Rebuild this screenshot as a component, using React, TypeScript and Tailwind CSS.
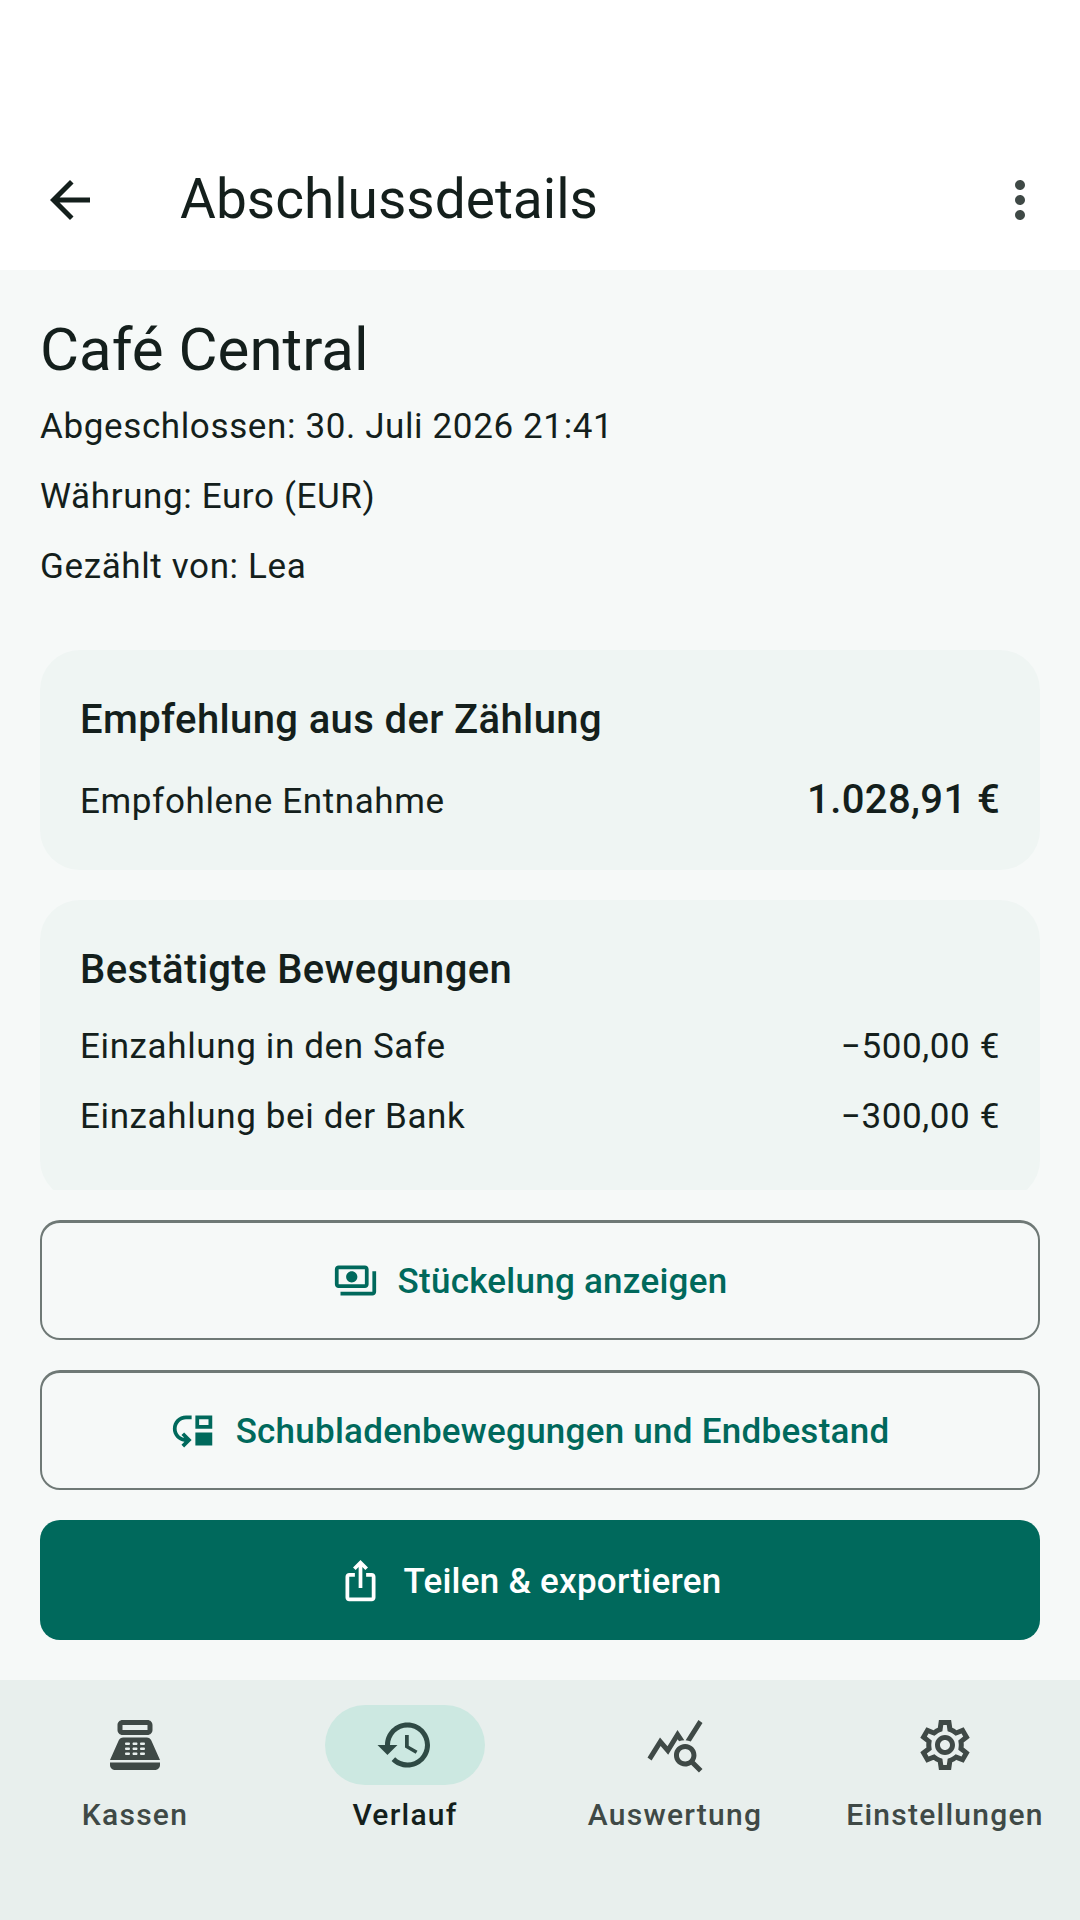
const P = {
  back: 'M20 11H7.83l5.59-5.59L12 4l-8 8 8 8 1.41-1.41L7.83 13H20v-2z',
  more: 'M12 8c1.1 0 2-.9 2-2s-.9-2-2-2-2 .9-2 2 .9 2 2 2zm0 2c-1.1 0-2 .9-2 2s.9 2 2 2 2-.9 2-2-.9-2-2-2zm0 6c-1.1 0-2 .9-2 2s.9 2 2 2 2-.9 2-2-.9-2-2-2z',
  payments: 'M19 14V6c0-1.1-.9-2-2-2H3c-1.1 0-2 .9-2 2v8c0 1.1.9 2 2 2h14c1.1 0 2-.9 2-2zm-2 0H3V6h14v8zm-7-7c-1.66 0-3 1.34-3 3s1.34 3 3 3 3-1.34 3-3-1.34-3-3-3zm13 0v11c0 1.1-.9 2-2 2H4v-2h17V7h2z',
  moveDown: 'M3 11c0 2.45 1.76 4.47 4.08 4.91l-1.49-1.49L7 13l4 4.01L7 21l-1.41-1.41 1.58-1.58v-.06C3.7 17.54 1 14.58 1 11c0-3.87 3.13-7 7-7h3v2H8c-2.76 0-5 2.24-5 5zM22 11V4h-9v7h9zm-2-2h-5V6h5v3zM13 20h9v-7h-9v7z',
  share: 'M16 5l-1.42 1.42-1.59-1.59V16h-1.98V4.83L9.42 6.42 8 5l4-4 4 4zm4 5v11c0 1.1-.9 2-2 2H6c-1.11 0-2-.9-2-2V10c0-1.11.89-2 2-2h3v2H6v11h12V10h-3V8h3c1.1 0 2 .9 2 2z',
  register: 'M17 2H7c-1.1 0-2 .9-2 2v2c0 1.1.9 2 2 2h10c1.1 0 2-.9 2-2V4c0-1.1-.9-2-2-2zm0 4H7V4h10v2zM20 22H4c-1.1 0-2-.9-2-2v-1h20v1c0 1.1-.9 2-2 2zM18.53 10.19C18.21 9.47 17.49 9 16.7 9H7.3c-.79 0-1.51.47-1.83 1.19L2 18h20l-3.47-7.81zM9.5 16h-1c-.28 0-.5-.22-.5-.5s.22-.5.5-.5h1c.28 0 .5.22.5.5s-.22.5-.5.5zm0-2h-1c-.28 0-.5-.22-.5-.5s.22-.5.5-.5h1c.28 0 .5.22.5.5s-.22.5-.5.5zm0-2h-1c-.28 0-.5-.22-.5-.5s.22-.5.5-.5h1c.28 0 .5.22.5.5s-.22.5-.5.5zm3 4h-1c-.28 0-.5-.22-.5-.5s.22-.5.5-.5h1c.28 0 .5.22.5.5s-.22.5-.5.5zm0-2h-1c-.28 0-.5-.22-.5-.5s.22-.5.5-.5h1c.28 0 .5.22.5.5s-.22.5-.5.5zm0-2h-1c-.28 0-.5-.22-.5-.5s.22-.5.5-.5h1c.28 0 .5.22.5.5s-.22.5-.5.5zm3 4h-1c-.28 0-.5-.22-.5-.5s.22-.5.5-.5h1c.28 0 .5.22.5.5s-.22.5-.5.5zm0-2h-1c-.28 0-.5-.22-.5-.5s.22-.5.5-.5h1c.28 0 .5.22.5.5s-.22.5-.5.5zm0-2h-1c-.28 0-.5-.22-.5-.5s.22-.5.5-.5h1c.28 0 .5.22.5.5s-.22.5-.5.5z',
  history: 'M13 3c-4.97 0-9 4.03-9 9H1l3.89 3.89.07.14L9 12H6c0-3.87 3.13-7 7-7s7 3.13 7 7-3.13 7-7 7c-1.93 0-3.68-.79-4.94-2.06l-1.42 1.42C8.27 19.99 10.51 21 13 21c4.97 0 9-4.03 9-9s-4.03-9-9-9zm-1 5v5l4.28 2.54.72-1.21-3.5-2.08V8H12z',
  stats: 'M19.88 18.47c.44-.7.7-1.51.7-2.39 0-2.49-2.01-4.5-4.5-4.5s-4.5 2.01-4.5 4.5 2.01 4.5 4.49 4.5c.88 0 1.7-.26 2.39-.7L21.58 23 23 21.58l-3.12-3.11zm-3.8.11c-1.38 0-2.5-1.12-2.5-2.5s1.12-2.5 2.5-2.5 2.5 1.12 2.5 2.5-1.12 2.5-2.5 2.5zm-.36-8.5c-.74.02-1.45.18-2.1.45l-.55-.83-3.8 6.18-3.01-3.52-3.63 5.81L1 17l5-8 3 3.5L13 6l2.72 4.08zm2.59.5c-.64-.28-1.33-.45-2.05-.49L21.38 2 23 3.18l-4.69 7.4z',
  settings: 'M19.44 12.99l-.01.02c.04-.33.08-.67.08-1.01 0-.34-.03-.66-.07-.99l.01.02 2.44-1.92-2.43-4.22-2.87 1.16.01.01c-.52-.4-1.09-.74-1.71-.99h.01L14.44 2H9.57l-.44 3.07h.01c-.62.25-1.19.59-1.71.99l.01-.01-2.88-1.17-2.44 4.22 2.44 1.92.01-.02c-.04.33-.07.65-.07.99 0 .34.03.68.08 1.01l-.01-.02-2.1 1.65-.33.26 2.43 4.2 2.88-1.15-.02-.04c.53.41 1.1.75 1.73 1.01h-.03L9.58 22h4.85s.03-.18.06-.42l.38-2.65h-.01c.62-.25 1.2-.59 1.73-1.01l-.02.04 2.88 1.15 2.43-4.2s-.14-.12-.33-.26l-2.11-1.66zm-1.98-1.71c.04.31.05.52.05.73 0 .21-.02.43-.05.73l-.14 1.13.89.7 1.08.84-.7 1.21-1.27-.51-1.04-.42-.9.68c-.43.32-.84.56-1.25.73l-1.06.43-.16 1.13-.2 1.35h-1.4l-.19-1.35-.16-1.13-1.06-.43c-.43-.18-.83-.41-1.23-.71l-.91-.7-1.06.43-1.27.51-.7-1.21 1.08-.84.89-.7-.14-1.13c-.03-.31-.05-.54-.05-.74s.02-.43.05-.73l.14-1.13-.89-.7-1.08-.84.7-1.21 1.27.51 1.04.42.9-.68c.43-.32.84-.56 1.25-.73l1.06-.43.16-1.13.2-1.35h1.39l.19 1.35.16 1.13 1.06.43c.43.18.83.41 1.23.71l.91.7 1.06-.43 1.27-.51.7 1.21-1.07.85-.89.7.14 1.13zM12 8c-2.21 0-4 1.79-4 4s1.79 4 4 4 4-1.79 4-4-1.79-4-4-4zm0 6c-1.1 0-2-.9-2-2s.9-2 2-2 2 .9 2 2-.9 2-2 2z',
};

function Icon({ d, className }: { d: string; className?: string }) {
  return (
    <svg viewBox="0 0 24 24" fill="currentColor" className={className}>
      <path d={d} />
    </svg>
  );
}

function Row({ label, value }: { label: string; value: string }) {
  return (
    <div className="flex justify-between h-[50px] text-[35px] leading-[54px] tracking-[0.625px] text-[#141f1c]">
      <span>{label}</span>
      <span>{value}</span>
    </div>
  );
}

function ActionButton({ d, label, filled }: { d: string; label: string; filled?: boolean }) {
  return (
    <button className={`w-full h-[120px] rounded-[20px] pr-[20px] flex items-center justify-center gap-[20px] text-[35px] font-medium tracking-[0.25px] ${filled ? 'bg-[#00695c] text-white' : 'border-2 border-t-[3px] border-[#6f7976] text-[#00695c]'}`}>
      <Icon d={d} className="w-[45px] h-[45px]" />
      <span className="pt-[4px]">{label}</span>
    </button>
  );
}

function NavItem({ d, label, active }: { d: string; label: string; active?: boolean }) {
  return (
    <div className="flex-1 flex flex-col items-center">
      <div className={`w-[160px] h-[80px] rounded-full flex items-center justify-center ${active ? 'bg-[#cce8e1]' : ''}`}>
        <Icon d={d} className={`w-[60px] h-[60px] ${active ? 'text-[#2f4a45]' : 'text-[#3f4946]'}`} />
      </div>
      <span className={`mt-[10px] text-[30px] leading-[40px] font-medium tracking-[1.25px] ${active ? 'text-[#141f1c]' : 'text-[#3f4946]'}`}>
        {label}
      </span>
    </div>
  );
}

export default function App() {
  return (
    <div className="w-[1080px] h-[1920px] flex flex-col bg-[#f6f9f8] font-['Roboto',sans-serif]">
      <header className="h-[270px] bg-white flex items-end pb-[10px] shrink-0">
        <div className="h-[120px] w-full flex items-center pl-[40px] pr-[30px]">
          <Icon d={P.back} className="w-[60px] h-[60px] text-[#141f1c]" />
          <h1 className="ml-[80px] pb-[2px] flex-1 text-[55px] text-[#141f1c]">Abschlussdetails</h1>
          <Icon d={P.more} className="w-[60px] h-[60px] text-[#3f4946]" />
        </div>
      </header>

      <main className="flex-1 px-[40px] pt-[40px] flex flex-col">
        <h2 className="text-[60px] leading-[80px] text-[#141f1c]">Café Central</h2>
        <div className="mt-[10px] flex flex-col gap-[20px] text-[35px] leading-[54px] tracking-[0.625px] text-[#141f1c]">
          <p className="h-[50px]">Abgeschlossen: 30. Juli 2026 21:41</p>
          <p className="h-[50px]">Währung: Euro (EUR)</p>
          <p className="h-[50px]">Gezählt von: Lea</p>
        </div>

        <section className="mt-[60px] rounded-[40px] bg-[#eff5f3] p-[40px]">
          <h3 className="text-[40px] leading-[60px] font-medium tracking-[0.375px] text-[#141f1c]">Empfehlung aus der Zählung</h3>
          <div className="mt-[20px] h-[60px] flex justify-between items-center text-[35px] tracking-[0.625px] text-[#141f1c]">
            <span className="pt-[4px]">Empfohlene Entnahme</span>
            <span className="text-[40px] font-medium tracking-[0.375px]">1.028,91 €</span>
          </div>
        </section>

        <div className="mt-[30px] h-[290px] overflow-hidden shrink-0">
          <section className="h-[300px] rounded-[40px] bg-[#eff5f3] px-[40px] pt-[40px]">
            <h3 className="text-[40px] leading-[60px] font-medium tracking-[0.375px] text-[#141f1c]">Bestätigte Bewegungen</h3>
            <div className="mt-[20px] flex flex-col gap-[20px]">
              <Row label="Einzahlung in den Safe" value="−500,00 €" />
              <Row label="Einzahlung bei der Bank" value="−300,00 €" />
            </div>
          </section>
        </div>

        <div className="mt-[30px] flex flex-col gap-[30px]">
          <ActionButton d={P.payments} label="Stückelung anzeigen" />
          <ActionButton d={P.moveDown} label="Schubladenbewegungen und Endbestand" />
          <ActionButton d={P.share} label="Teilen & exportieren" filled />
        </div>
      </main>

      <nav className="h-[240px] bg-[#e8efed] flex items-start pt-[25px] shrink-0">
        <NavItem d={P.register} label="Kassen" />
        <NavItem d={P.history} label="Verlauf" active />
        <NavItem d={P.stats} label="Auswertung" />
        <NavItem d={P.settings} label="Einstellungen" />
      </nav>
    </div>
  );
}
